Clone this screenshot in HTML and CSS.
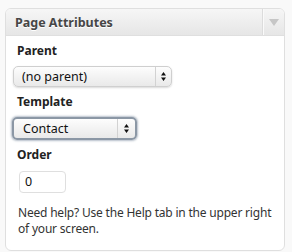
FILE: index.html
```html
<!DOCTYPE html>
<html lang="en">
<head>
    <meta charset="UTF-8">
    <title>Page Attributes</title>
    <link rel="stylesheet" href="styles.css">
</head>
<body>
    <div class="postbox">
        <div class="handlediv">
            <h3 class="hndle">Page Attributes</h3>
            <div class="toggle">
                <svg width="10" height="7" viewBox="0 0 10 7"><path d="M0 0H10L5 7Z" fill="#c6c6c6"/></svg>
            </div>
        </div>
        <div class="inside">
            <p class="label">Parent</p>
            <div class="select parent-select">
                <span class="value">(no parent)</span>
                <span class="arrows">
                    <svg width="5" height="9" viewBox="0 0 5 9"><path d="M2.5 0L5 3.5H0Z M2.5 9L5 5.5H0Z" fill="#111"/></svg>
                </span>
            </div>
            <p class="label">Template</p>
            <div class="select template-select">
                <span class="value">Contact</span>
                <span class="arrows">
                    <svg width="5" height="9" viewBox="0 0 5 9"><path d="M2.5 0L5 3.5H0Z M2.5 9L5 5.5H0Z" fill="#111"/></svg>
                </span>
            </div>
            <p class="label">Order</p>
            <div class="order-input">0</div>
            <p class="help">Need help? Use the Help tab in the upper right of your screen.</p>
        </div>
    </div>
</body>
</html>
```
FILE: styles.css
```css
body {
    margin: 0;
    padding: 8px 7px 0 5px;
    background-color: #f9f9f9;
    font-family: 'Noto Sans', 'DejaVu Sans', sans-serif;
    color: #333;
}

.postbox {
    width: 278px;
    background-color: #fff;
    border: 1px solid #dfdfdf;
    border-radius: 6px;
}

.handlediv {
    display: flex;
    height: 26px;
    background: linear-gradient(#f6f6f6, #e6e6e6);
    border-bottom: 1px solid #dfdfdf;
    border-radius: 5px 5px 0 0;
}

.hndle {
    flex: 1;
    margin: 0;
    padding: 5px 0 0 9px;
    font-size: 12.5px;
    font-weight: bold;
    color: #464646;
    text-shadow: 0 1px 0 #fff;
}

.toggle {
    width: 21px;
    display: flex;
    align-items: center;
    justify-content: center;
    border-left: 1px solid #dcdcdc;
    box-shadow: inset 1px 0 0 #fafafa;
}

.inside {
    padding: 0 6px 13px 11px;
}

.label {
    margin: 6px 0 7px;
    font-size: 12px;
    font-weight: bold;
    color: #222;
}

.select {
    display: flex;
    align-items: stretch;
    border-radius: 5px;
    background: linear-gradient(#fdfdfd, #e9e9e9);
    font-size: 12.5px;
    color: #111;
}

.select .value {
    flex: 1;
    display: flex;
    align-items: center;
}

.select .arrows {
    display: flex;
    align-items: center;
    justify-content: center;
    border-left: 1px solid #d2d2d2;
}

.parent-select {
    width: 157px;
    height: 19px;
    margin-left: -4px;
    border: 1px solid #cfcfcf;
    box-shadow: 0 1px 2px rgba(0,0,0,0.15);
}

.parent-select .value {
    padding-left: 8px;
}

.parent-select .arrows {
    width: 15px;
}

.template-select {
    width: 121px;
    height: 19px;
    margin-left: -5px;
    border: 2px solid #8b97a5;
    box-shadow: 0 0 2px 1px rgba(90,110,135,0.45);
}

.template-select .value {
    padding-left: 9px;
}

.template-select .arrows {
    width: 17px;
}

.order-input {
    width: 40px;
    height: 20px;
    margin: 8px 0 0 2px;
    padding-left: 5px;
    border: 1px solid #dfdfdf;
    border-radius: 4px;
    font-size: 12.5px;
    line-height: 20px;
    color: #111;
}

.help {
    margin: 12px 0 0 1px;
    font-size: 12px;
    letter-spacing: -0.2px;
    line-height: 16px;
    color: #333;
}
```
